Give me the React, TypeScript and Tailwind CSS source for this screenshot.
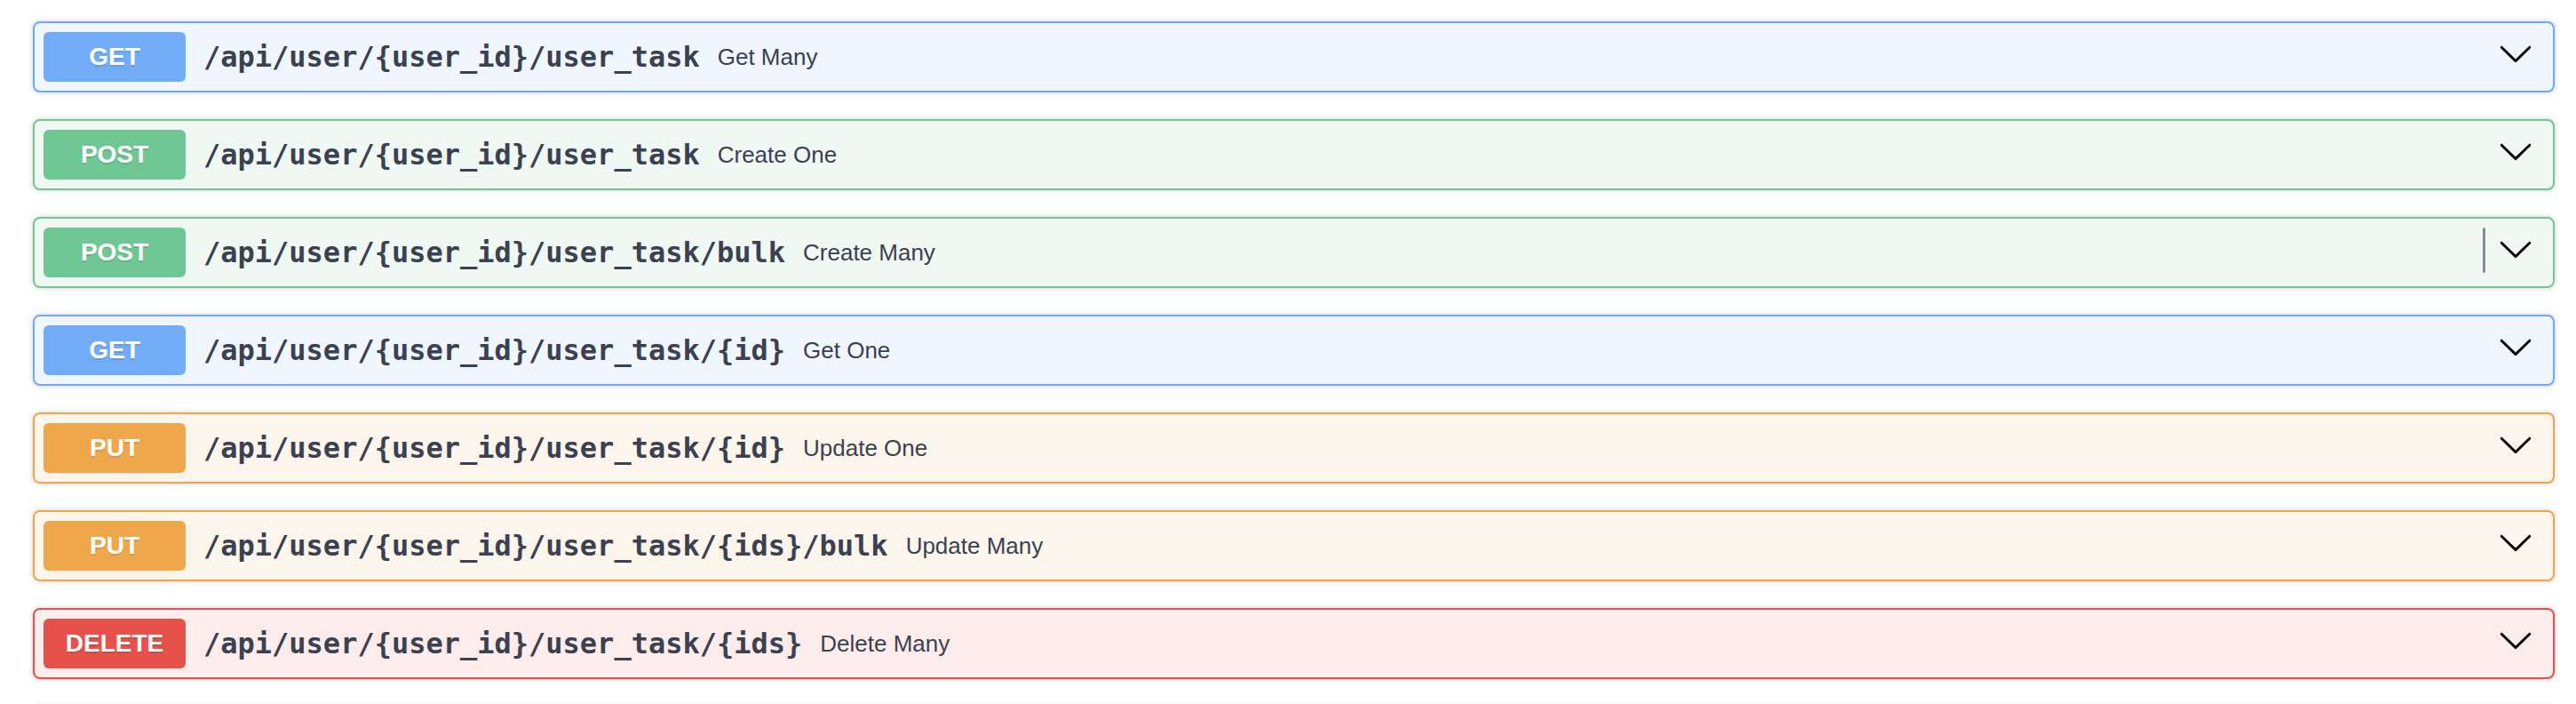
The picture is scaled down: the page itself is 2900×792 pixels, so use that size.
import { ReactNode } from "react";

type Method = "GET" | "POST" | "PUT" | "DELETE";

const styles: Record<Method, { box: string; badge: string }> = {
  GET: { box: "border-[#70a9f7] bg-[#eff6fe]", badge: "bg-[#72acf8]" },
  POST: { box: "border-[#6fc793] bg-[#eff8f3]", badge: "bg-[#6fc893]" },
  PUT: { box: "border-[#eda54a] bg-[#fcf5ec]", badge: "bg-[#eea84b]" },
  DELETE: { box: "border-[#e5504b] bg-[#fcecec]", badge: "bg-[#e6514b]" },
};

const ops: { method: Method; path: string; summary: string; cursor?: boolean }[] = [
  { method: "GET", path: "/api/user/{user_id}/user_task", summary: "Get Many" },
  { method: "POST", path: "/api/user/{user_id}/user_task", summary: "Create One" },
  { method: "POST", path: "/api/user/{user_id}/user_task/bulk", summary: "Create Many", cursor: true },
  { method: "GET", path: "/api/user/{user_id}/user_task/{id}", summary: "Get One" },
  { method: "PUT", path: "/api/user/{user_id}/user_task/{id}", summary: "Update One" },
  { method: "PUT", path: "/api/user/{user_id}/user_task/{ids}/bulk", summary: "Update Many" },
  { method: "DELETE", path: "/api/user/{user_id}/user_task/{ids}", summary: "Delete Many" },
];

const Arrow = () => (
  <svg width="40" height="40" viewBox="0 0 20 20" className="mb-2 fill-black">
    <path d="M17.418 6.109c.272-.268.709-.268.979 0s.271.701 0 .969l-7.908 7.83c-.27.268-.707.268-.979 0l-7.908-7.83c-.27-.268-.27-.701 0-.969.271-.268.709-.268.979 0L10 13.25l7.418-7.141z" />
  </svg>
);

const OpBlock = ({ method, path, summary, cursor }: { method: Method; path: string; summary: ReactNode; cursor?: boolean }) => {
  const s = styles[method];
  return (
    <div className={`mb-[30px] h-[80px] rounded-[8px] border-2 shadow-[0_0_6px_rgba(0,0,0,0.19)] ${s.box}`}>
      <div className="flex h-full items-center pl-[10px] pr-[22px]">
        <span
          className={`flex h-[56px] w-[160px] shrink-0 items-center justify-center rounded-[6px] font-['Liberation_Sans',Arial,sans-serif] text-[28px] font-bold text-white [text-shadow:0_2px_0_rgba(0,0,0,0.1)] ${s.badge}`}
        >
          {method}
        </span>
        <span className="px-[20px] font-['DejaVu_Sans_Mono',monospace] text-[32px] font-semibold text-[#3b4151]">
          {path}
        </span>
        <span className="font-['Liberation_Sans',Arial,sans-serif] text-[26px] text-[#3b4151]">{summary}</span>
        <div className="flex-1" />
        {cursor && <div className="mr-[14px] mt-[-6px] h-[51px] w-[3px] rounded-full bg-[#868a99]" />}
        <Arrow />
      </div>
    </div>
  );
};

export default function App() {
  return (
    <div className="min-h-screen bg-white pl-[37px] pr-[24px] pt-[24px]">
      {ops.map((op, i) => (
        <OpBlock key={i} {...op} />
      ))}
      <div className="h-[80px] rounded-[8px] border-2 border-[#ececec] bg-white shadow-[0_0_6px_rgba(0,0,0,0.19)]" />
    </div>
  );
}
